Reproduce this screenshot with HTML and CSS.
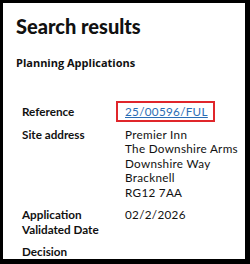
FILE: index.html
```html
<!DOCTYPE html>
<html>
<head>
<meta charset="utf-8">
<link rel="stylesheet" href="styles.css">
</head>
<body>
<div class="frame">
  <h1 class="title">Search results</h1>
  <h2 class="subtitle">Planning Applications</h2>
  <dl class="details">
    <dt>Reference</dt>
    <dd><span class="hl"><a href="#" class="ref">25/00596/FUL</a></span></dd>
    <dt>Site address</dt>
    <dd>Premier Inn<br>The Downshire Arms<br>Downshire Way<br>Bracknell<br>RG12 7AA</dd>
    <dt>Application Validated Date</dt>
    <dd>02/2/2026</dd>
    <dt>Decision</dt>
    <dd></dd>
  </dl>
</div>
</body>
</html>
```
FILE: styles.css
```css
html, body {
  margin: 0;
  padding: 0;
  background: #000;
}
.frame {
  box-sizing: border-box;
  width: 250px;
  height: 264px;
  background: #fff;
  border-style: solid;
  border-color: #000;
  border-width: 3px 5px 5px 3px;
  padding: 0 0 0 13px;
  overflow: hidden;
  color: #111;
}
.title {
  margin: 0;
  padding-top: 10px;
  font-family: Lato, sans-serif;
  font-weight: 900;
  font-size: 20px;
  line-height: 26px;
}
.subtitle {
  margin: 17px 0 0 0;
  font-family: "Open Sans", sans-serif;
  font-weight: 700;
  font-size: 11px;
  line-height: 14px;
}
.details {
  margin: 34px 0 0 6px;
  display: grid;
  grid-template-columns: 103px 1fr;
  row-gap: 8px;
  font-family: Lato, sans-serif;
  font-size: 11.7px;
  line-height: 14.5px;
}
.details dt {
  font-weight: 700;
  width: 84px;
}
.details dd {
  margin: 0;
  letter-spacing: 0.3px;
}
.hl {
  display: inline-block;
  border: 2px solid #e0262b;
  padding: 1px 5px 1px 7px;
  margin: -3px 0 -3px -9px;
}
.ref {
  color: #2a6db5;
  text-decoration: underline;
}
```
